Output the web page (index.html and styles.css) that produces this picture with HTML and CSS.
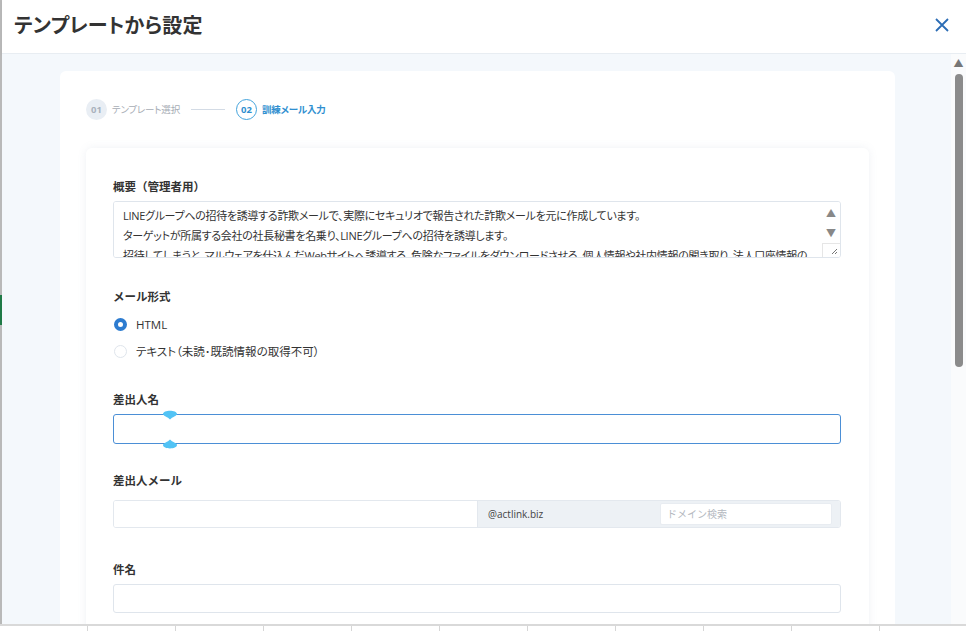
FILE: index.html
```html
<!DOCTYPE html>
<html lang="ja">
  <head>
    <meta charset="UTF-8" />
    <meta name="viewport" content="width=device-width, initial-scale=1.0" />
    <title>テンプレートから設定</title>
    <link rel="stylesheet" href="styles.css">
  </head>
  <body>
    <div class="modal">
      <header class="modal-head">
        <h1>テンプレートから設定</h1>
        <button class="close" aria-label="閉じる">
          <svg width="14" height="14" viewBox="0 0 14 14">
            <path d="M1 1 L13 13 M13 1 L1 13" stroke="#2c6db5" stroke-width="1.8" fill="none" />
          </svg>
        </button>
      </header>

      <div class="modal-body">
        <div class="scroll-area">
          <div class="card">
            <div class="stepper">
              <div class="step">
                <span class="step-num">01</span>
                <span class="step-label">テンプレート選択</span>
              </div>
              <span class="step-line"></span>
              <div class="step active">
                <span class="step-num">02</span>
                <span class="step-label">訓練メール入力</span>
              </div>
            </div>

            <div class="form-card">
              <div class="field first">
                <label class="field-label">概要（管理者用）</label>
                <div class="memo">
                  <textarea readonly>LINEグループへの招待を誘導する詐欺メールで、実際にセキュリオで報告された詐欺メールを元に作成しています。
ターゲットが所属する会社の社長秘書を名乗り、LINEグループへの招待を誘導します。
招待してしまうと、マルウェアを仕込んだWebサイトへ誘導する、危険なファイルをダウンロードさせる、個人情報や社内情報の聞き取り、法人口座情報の聞き取りなどが行われます。</textarea>
                  <div class="memo-bar">
                    <span class="arrow">▲</span>
                    <span class="arrow">▼</span>
                    <span class="grip">
                      <svg width="8" height="8" viewBox="0 0 8 8">
                        <path d="M7 2 L2 7 M7 5 L5 7" stroke="#777" stroke-width="1" fill="none" />
                      </svg>
                    </span>
                  </div>
                </div>
              </div>

              <div class="field">
                <label class="field-label">メール形式</label>
                <div class="radios">
                  <label class="radio"><input type="radio" name="fmt" checked /> HTML</label>
                  <label class="radio"><input type="radio" name="fmt" /> テキスト（未読･既読情報の取得不可）</label>
                </div>
              </div>

              <div class="field">
                <label class="field-label">差出人名</label>
                <div class="name-wrap">
                  <input type="text" class="text-input focused" />
                  <svg class="handle handle-top" width="16" height="11" viewBox="0 0 16 11">
                    <path d="M1 5 C1 0.5 15 0.5 15 5 C15 7 10 8 8 10.5 C6 8 1 7 1 5 Z" fill="#52c3f5" />
                  </svg>
                  <svg class="handle handle-bottom" width="16" height="11" viewBox="0 0 16 11">
                    <path d="M1 6 C1 10.5 15 10.5 15 6 C15 4 10 3 8 0.5 C6 3 1 4 1 6 Z" fill="#52c3f5" />
                  </svg>
                </div>
              </div>

              <div class="field sender-mail">
                <label class="field-label">差出人メール</label>
                <div class="mail-row">
                  <input type="text" class="mail-local" />
                  <div class="mail-domain">
                    <span class="domain-text">@actlink.biz</span>
                    <input type="text" class="domain-search" placeholder="ドメイン検索" />
                  </div>
                </div>
              </div>

              <div class="field subject">
                <label class="field-label">件名</label>
                <input type="text" class="text-input" />
              </div>
            </div>
          </div>
        </div>

        <div class="vscroll">
          <span class="vscroll-arrow">▲</span>
          <span class="vscroll-thumb"></span>
        </div>
      </div>
    </div>
    <div class="sheet-strip"></div>
  </body>
</html>
```

FILE: styles.css
```css
* {
  box-sizing: border-box;
}
body {
  margin: 0;
  width: 966px;
  height: 631px;
  overflow: hidden;
  font-family: "Open Sans", "Noto Sans CJK JP", sans-serif;
  font-feature-settings: "palt";
  color: #333;
  background: linear-gradient(to bottom, #b9b9b9 0, #b9b9b9 295px, #1f7a47 295px, #1f7a47 325px, #b9b9b9 325px) left top / 2px 100% no-repeat, #fff;
}
.modal {
  margin-left: 2px;
  height: 624px;
  display: flex;
  flex-direction: column;
  background: #fff;
}
.modal-head {
  height: 54px;
  flex-shrink: 0;
  display: flex;
  align-items: center;
  justify-content: space-between;
  padding: 0 17px 4px 12px;
  border-bottom: 1px solid #e8edf2;
  box-shadow: 0 1px 3px rgba(0, 0, 0, 0.04);
}
.modal-head h1 {
  margin: 0;
  font-size: 20px;
  font-weight: 700;
  color: #333;
  letter-spacing: 0.2px;
}
.close {
  border: none;
  background: none;
  padding: 0;
  cursor: pointer;
  display: flex;
}
.modal-body {
  flex: 1;
  display: flex;
  overflow: hidden;
  background: #f4f8fc;
}
.scroll-area {
  flex: 1;
  padding: 17px 56px 0 58px;
  overflow: hidden;
}
.card {
  background: #fff;
  border-radius: 6px;
  padding: 27px 26px 0 26px;
  height: 600px;
}
.stepper {
  display: flex;
  align-items: center;
  height: 22px;
}
.step {
  display: flex;
  align-items: center;
  gap: 5px;
}
.step-num {
  width: 21px;
  height: 21px;
  border-radius: 50%;
  background: #e9eef4;
  color: #a9b2bd;
  font-size: 9.5px;
  font-weight: 700;
  display: flex;
  align-items: center;
  justify-content: center;
}
.step-label {
  font-size: 9.5px;
  letter-spacing: -0.2px;
  color: #a7adb5;
}
.step-line {
  width: 34px;
  height: 1px;
  background: #d3dbe5;
  margin: 0 11px;
}
.step.active .step-num {
  background: #fff;
  border: 1.5px solid #43a3dc;
  color: #2f8fd0;
}
.step.active .step-label {
  color: #2f8fd0;
  font-weight: 700;
}
.form-card {
  margin-top: 28px;
  padding: 31px 28px 0 27px;
  background: #fff;
  border-radius: 6px;
  box-shadow: 0 0 8px rgba(120, 140, 170, 0.12);
  height: 500px;
}
.field {
  margin-top: 31px;
}
.field.first {
  margin-top: 0;
}
.field.sender-mail {
  margin-top: 29px;
}
.field.subject {
  margin-top: 34px;
}
.field-label {
  display: block;
  font-size: 11.5px;
  font-weight: 700;
  font-feature-settings: normal;
  line-height: 16px;
  color: #333;
  margin-bottom: 6px;
}
.memo {
  display: flex;
  height: 57px;
  border: 1px solid #dfe5ec;
  border-radius: 3px;
  overflow: hidden;
}
.memo textarea {
  flex: 1;
  border: none;
  resize: none;
  overflow: hidden;
  padding: 4px 9px;
  font-family: "Open Sans", "Noto Sans CJK JP", sans-serif;
  font-feature-settings: "palt";
  font-size: 11px;
  letter-spacing: -0.3px;
  line-height: 20px;
  color: #333;
  outline: none;
}
.memo-bar {
  width: 18px;
  display: flex;
  flex-direction: column;
  align-items: center;
  background: #fff;
}
.arrow {
  font-size: 10px;
  color: #888;
  line-height: 20px;
}
.arrow:first-child {
  margin-top: 1px;
}
.grip {
  margin-top: auto;
  width: 18px;
  height: 16px;
  border-top: 1px solid #e6e6e6;
  border-left: 1px solid #e6e6e6;
  display: flex;
  align-items: flex-end;
  justify-content: flex-end;
  padding: 0 2px 2px 0;
}
.radios {
  margin-top: 9px;
  display: flex;
  flex-direction: column;
  gap: 7px;
}
.radio {
  display: flex;
  align-items: center;
  gap: 9px;
  height: 20px;
  font-size: 11.5px;
  color: #333;
}
.radio input {
  appearance: none;
  margin: 0 0 0 1px;
  width: 13px;
  height: 13px;
  border-radius: 50%;
  border: 1px solid #dfe5ec;
  background: #fff;
}
.radio input:checked {
  border: 4px solid #2d7cd0;
  background: #fff;
}
.text-input {
  display: block;
  width: 100%;
  height: 29px;
  border: 1px solid #dfe5ec;
  border-radius: 3px;
  outline: none;
  background: #fff;
}
.text-input.focused {
  border-color: #4b8fd6;
  height: 30px;
}
.name-wrap {
  position: relative;
}
.handle {
  position: absolute;
  left: 49px;
}
.handle-top {
  top: -5px;
}
.handle-bottom {
  top: 25px;
}
.mail-row {
  display: flex;
  height: 28px;
  margin-top: 11px;
  border: 1px solid #e3e8ee;
  border-radius: 3px;
  overflow: hidden;
}
.mail-local {
  width: 364px;
  border: none;
  border-right: 1px solid #e3e8ee;
  outline: none;
}
.mail-domain {
  flex: 1;
  display: flex;
  align-items: center;
  justify-content: space-between;
  background: #edf1f5;
  padding: 0 8px 0 10px;
}
.domain-text {
  font-size: 10px;
  color: #444;
}
.domain-search {
  width: 172px;
  height: 22px;
  border: 1px solid #e8ecf1;
  border-radius: 2px;
  padding: 0 6px;
  font-size: 10px;
  font-family: "Open Sans", "Noto Sans CJK JP", sans-serif;
  outline: none;
}
.domain-search::placeholder {
  color: #b4b9bf;
}
.vscroll {
  width: 15px;
  background: #fafbfc;
  display: flex;
  flex-direction: column;
  align-items: center;
  padding-top: 3px;
}
.vscroll-arrow {
  font-size: 10px;
  line-height: 12px;
  color: #777;
}
.vscroll-thumb {
  margin-top: 5px;
  width: 8px;
  height: 293px;
  border-radius: 4px;
  background: #8b8b8b;
}
.sheet-strip {
  height: 7px;
  border-top: 2px solid #d9d9d9;
  background: repeating-linear-gradient(to right, #fff 0, #fff 87px, #d6d6d6 87px, #d6d6d6 88px);
}
```
